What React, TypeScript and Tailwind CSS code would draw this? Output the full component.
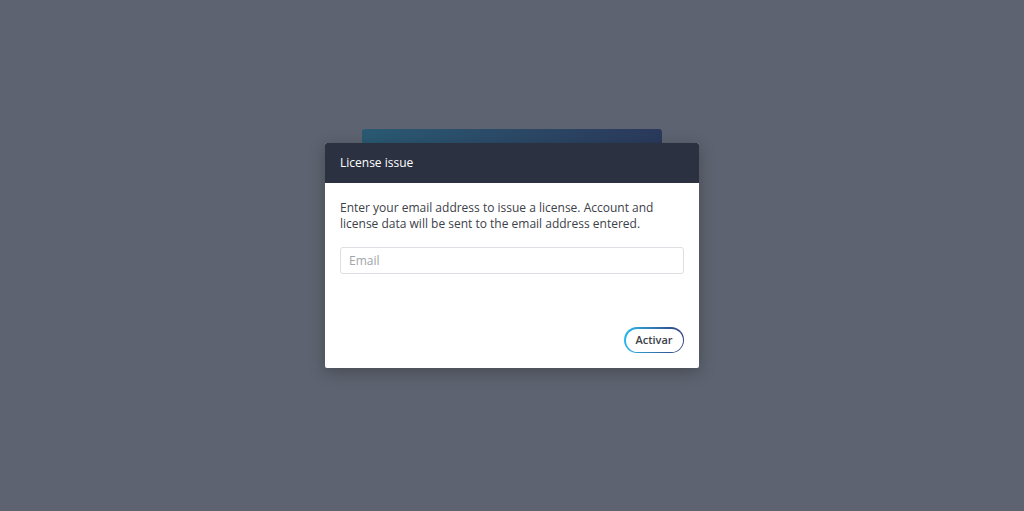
export default function App() {
  return (
    <div className="w-[1024px] h-[511px] bg-[#5d6370] flex justify-center" style={{ fontFamily: '"Open Sans", "Noto Sans", sans-serif' }}>
      <div className="mt-[129px] w-[374px] flex flex-col items-center">
        <div className="w-[300px] h-[14px] rounded-t-[3px] bg-gradient-to-r from-[#2a5a73] to-[#2b3a5c]" />
        <div className="w-[374px] bg-white shadow-[0_4px_16px_rgba(0,0,0,0.25)] rounded-[2px] overflow-hidden">
          <div className="h-[40px] bg-[#2b3140] flex items-center px-[15px] text-[12px] text-white">License issue</div>
          <div className="px-[15px] pt-[17px] pb-[15px]">
            <p className="text-[12px] leading-[16px] text-[#3c414a]">
              Enter your email address to issue a license. Account and license data will be sent to the email address entered.
            </p>
            <div className="mt-[15px] h-[27px] border border-[#dcdfe3] rounded-[3px] flex items-center px-[8px] text-[12px] text-[#a0a4aa]">Email</div>
            <div className="mt-[53px] flex justify-end">
              <div className="rounded-full p-[1.5px] bg-gradient-to-r from-[#27b8ec] to-[#2c3d78]">
                <div className="rounded-full bg-white h-[23px] w-[57px] flex items-center justify-center text-[11px] font-semibold text-[#3c414a]">Activar</div>
              </div>
            </div>
          </div>
        </div>
      </div>
    </div>
  );
}
